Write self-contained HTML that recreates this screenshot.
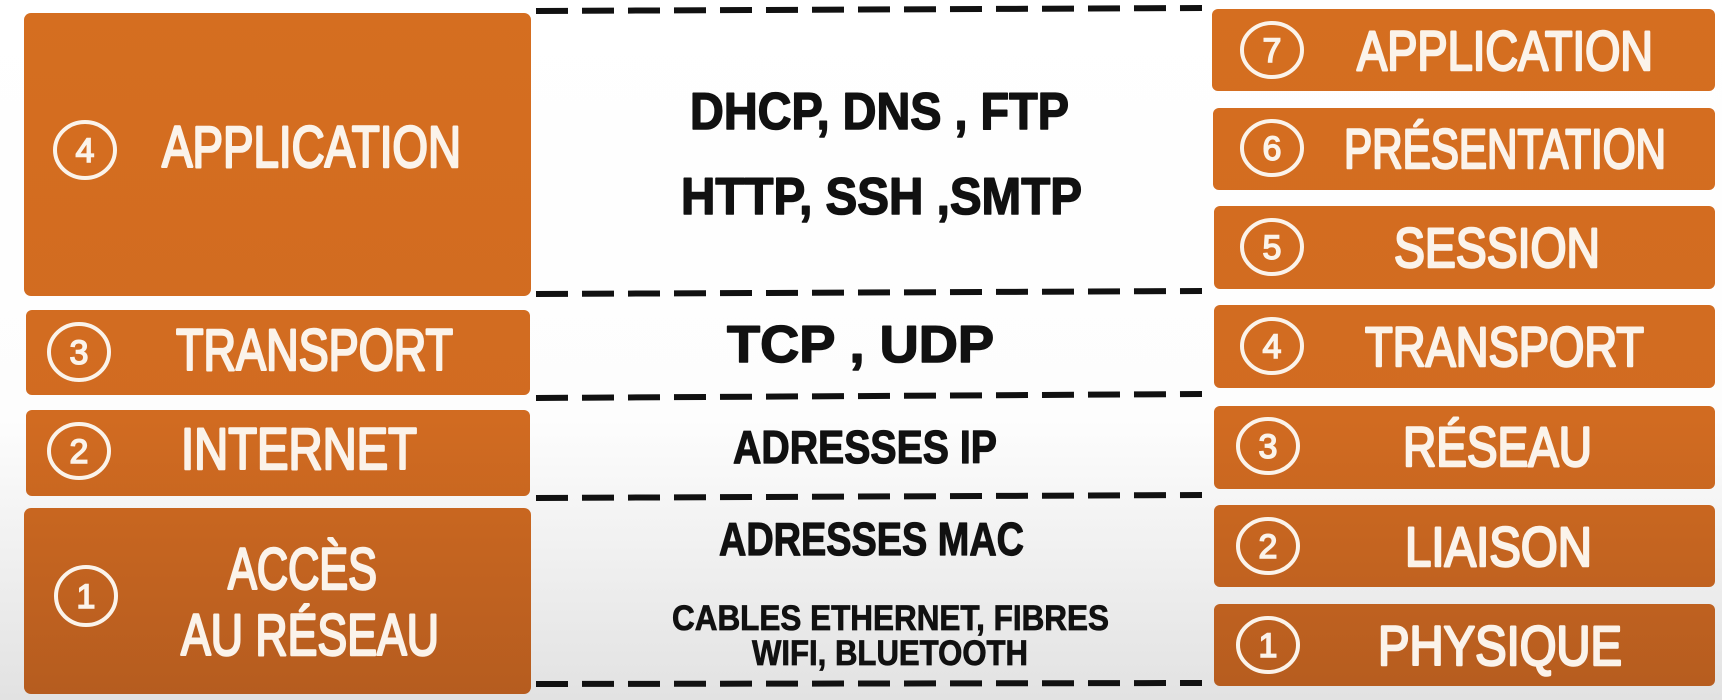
<!DOCTYPE html>
<html><head><meta charset="utf-8"><style>
html,body{margin:0;padding:0;width:1722px;height:700px;overflow:hidden}
svg{display:block}
text{font-family:"Liberation Sans",sans-serif}
</style></head><body>
<svg width="1722" height="700" viewBox="0 0 1722 700" xmlns="http://www.w3.org/2000/svg">
<defs>
<linearGradient id="bg" x1="0" y1="0" x2="0" y2="1">
<stop offset="0" stop-color="#ffffff"/><stop offset="0.6" stop-color="#fdfdfd"/><stop offset="1" stop-color="#e2e2e2"/>
</linearGradient>
<linearGradient id="or" gradientUnits="userSpaceOnUse" x1="0" y1="0" x2="0" y2="700">
<stop offset="0" stop-color="#d56e20"/><stop offset="0.6" stop-color="#d16b21"/><stop offset="1" stop-color="#b55c1f"/>
</linearGradient>
</defs>
<rect width="1722" height="700" fill="url(#bg)"/>
<g fill="url(#or)">
<rect x="24" y="13" width="507" height="283" rx="7"/>
<rect x="26" y="310" width="504" height="85" rx="6"/>
<rect x="26" y="410" width="504" height="86" rx="6"/>
<rect x="24" y="508" width="507" height="186" rx="7"/>
<rect x="1212" y="9" width="503" height="82" rx="6"/>
<rect x="1213" y="108" width="502" height="82" rx="6"/>
<rect x="1214" y="206" width="501" height="83" rx="6"/>
<rect x="1214" y="305" width="501" height="83" rx="6"/>
<rect x="1214" y="406" width="501" height="83" rx="6"/>
<rect x="1214" y="505" width="501" height="82" rx="6"/>
<rect x="1214" y="604" width="501" height="82" rx="6"/>
</g>
<g stroke="#111" stroke-width="6" stroke-dasharray="32 14" fill="none">
<line x1="536" y1="11" x2="1202" y2="8"/>
<line x1="536" y1="294" x2="1202" y2="291"/>
<line x1="536" y1="398" x2="1202" y2="394"/>
<line x1="536" y1="498" x2="1202" y2="495"/>
<line x1="536" y1="684" x2="1202" y2="683"/>
</g>
<g fill="none" stroke="#fbf3ea" stroke-width="4">
<ellipse cx="85" cy="150" rx="30" ry="28"/>
<ellipse cx="79" cy="352" rx="30" ry="28"/>
<ellipse cx="79" cy="451" rx="30" ry="27"/>
<ellipse cx="86" cy="596" rx="30" ry="29"/>
<ellipse cx="1272" cy="50" rx="30" ry="27"/>
<ellipse cx="1272" cy="148" rx="30" ry="27"/>
<ellipse cx="1272" cy="247" rx="30" ry="27"/>
<ellipse cx="1272" cy="346" rx="30" ry="27"/>
<ellipse cx="1268" cy="446" rx="30" ry="27"/>
<ellipse cx="1268" cy="546" rx="30" ry="27"/>
<ellipse cx="1268" cy="645" rx="30" ry="27"/>
</g>
<g fill="#fbf3ea" stroke="#fbf3ea" stroke-width="1.5" font-size="34" text-anchor="middle">
<text x="85" y="162">4</text><text x="79" y="364">3</text><text x="79" y="463">2</text><text x="86" y="608">1</text>
<text x="1272" y="62">7</text><text x="1272" y="160">6</text><text x="1272" y="259">5</text><text x="1272" y="358">4</text>
<text x="1268" y="458">3</text><text x="1268" y="558">2</text><text x="1268" y="657">1</text>
</g>
<g fill="#fbf3ea" stroke="#fbf3ea" stroke-width="2.5" stroke-linejoin="round" font-size="58">
<text x="162" y="167" textLength="299" lengthAdjust="spacingAndGlyphs">APPLICATION</text>
<text x="176" y="370" textLength="277" lengthAdjust="spacingAndGlyphs">TRANSPORT</text>
<text x="181" y="469" textLength="236" lengthAdjust="spacingAndGlyphs">INTERNET</text>
<text x="228" y="589" textLength="149" lengthAdjust="spacingAndGlyphs">ACCÈS</text>
<text x="181" y="655" textLength="258" lengthAdjust="spacingAndGlyphs">AU RÉSEAU</text>
</g>
<g fill="#fbf3ea" stroke="#fbf3ea" stroke-width="2.5" stroke-linejoin="round" font-size="56">
<text x="1357" y="70" textLength="296" lengthAdjust="spacingAndGlyphs">APPLICATION</text>
<text x="1344" y="168" textLength="322" lengthAdjust="spacingAndGlyphs">PRÉSENTATION</text>
<text x="1394" y="267" textLength="206" lengthAdjust="spacingAndGlyphs">SESSION</text>
<text x="1365" y="366" textLength="279" lengthAdjust="spacingAndGlyphs">TRANSPORT</text>
<text x="1403" y="466" textLength="189" lengthAdjust="spacingAndGlyphs">RÉSEAU</text>
<text x="1405" y="566" textLength="187" lengthAdjust="spacingAndGlyphs">LIAISON</text>
<text x="1378" y="665" textLength="244" lengthAdjust="spacingAndGlyphs">PHYSIQUE</text>
</g>
<g fill="#111" stroke="#111" stroke-width="1.5" stroke-linejoin="round" font-weight="bold" font-size="52">
<text x="690" y="129" textLength="379" lengthAdjust="spacingAndGlyphs">DHCP, DNS , FTP</text>
<text x="681" y="214" textLength="401" lengthAdjust="spacingAndGlyphs">HTTP, SSH ,SMTP</text>
<text x="727" y="362" textLength="267" lengthAdjust="spacingAndGlyphs">TCP , UDP</text>
</g>
<g fill="#111" stroke="#111" stroke-width="1.2" stroke-linejoin="round" font-weight="bold" font-size="46">
<text x="733" y="463" textLength="264" lengthAdjust="spacingAndGlyphs">ADRESSES IP</text>
<text x="719" y="555" textLength="305" lengthAdjust="spacingAndGlyphs">ADRESSES MAC</text>
</g>
<g fill="#111" stroke="#111" stroke-width="0.8" font-weight="bold" font-size="35">
<text x="672" y="630" textLength="437" lengthAdjust="spacingAndGlyphs">CABLES ETHERNET, FIBRES</text>
<text x="752" y="665" textLength="276" lengthAdjust="spacingAndGlyphs">WIFI, BLUETOOTH</text>
</g>
</svg>
</body></html>
